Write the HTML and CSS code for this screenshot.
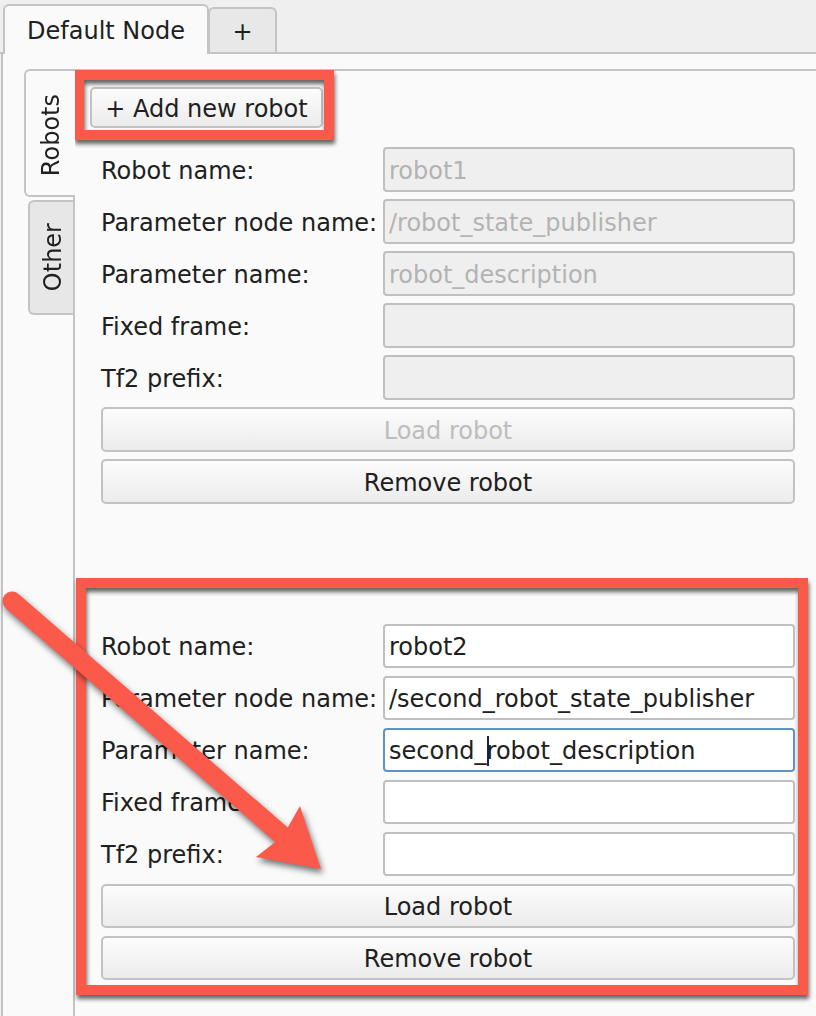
FILE: index.html
```html
<!DOCTYPE html>
<html>
<head>
<meta charset="utf-8">
<link rel="stylesheet" href="styles.css">
</head>
<body>
<div class="app">
  <div class="tabbar">
    <div class="tab active">Default Node</div>
    <div class="tab plus">+</div>
  </div>
  <div class="outer-pane">
    <div class="side-tabs">
      <div class="vtab active"><span>Robots</span></div>
      <div class="vtab other"><span>Other</span></div>
    </div>
    <div class="inner-pane">
      <button class="btn add">+ Add new robot</button>
      <div class="robot-form">
        <div class="label">Robot name:</div>
        <div class="field disabled">robot1</div>
        <div class="label">Parameter node name:</div>
        <div class="field disabled">/robot_state_publisher</div>
        <div class="label">Parameter name:</div>
        <div class="field disabled">robot_description</div>
        <div class="label">Fixed frame:</div>
        <div class="field disabled"></div>
        <div class="label">Tf2 prefix:</div>
        <div class="field disabled"></div>
        <button class="btn wide" disabled>Load robot</button>
        <button class="btn wide">Remove robot</button>
      </div>
      <div class="robot-form second">
        <div class="label">Robot name:</div>
        <div class="field">robot2</div>
        <div class="label">Parameter node name:</div>
        <div class="field">/second_robot_state_publisher</div>
        <div class="label">Parameter name:</div>
        <div class="field focused">second_<span class="caret"></span>robot_description</div>
        <div class="label">Fixed frame:</div>
        <div class="field"></div>
        <div class="label">Tf2 prefix:</div>
        <div class="field"></div>
        <button class="btn wide">Load robot</button>
        <button class="btn wide">Remove robot</button>
      </div>
    </div>
  </div>
  <div class="box box1"></div>
  <div class="box box2"></div>
  <svg class="arrow" width="816" height="1016" viewBox="0 0 816 1016">
    <line x1="12" y1="601" x2="283" y2="836" stroke="#fb5a4b" stroke-width="19" stroke-linecap="round"/>
    <polygon points="321,869 300,806 283,836 256,857" fill="#fb5a4b"/>
  </svg>
</div>
</body>
</html>
```

FILE: styles.css
```css
html, body {
  margin: 0;
  padding: 0;
}
body {
  background: #efefef;
  font-family: "DejaVu Sans", "Noto Sans", sans-serif;
  font-size: 24px;
  color: #202020;
  width: 816px;
  height: 1016px;
  overflow: hidden;
}
.app {
  position: relative;
  width: 816px;
  height: 1016px;
  display: flex;
  flex-direction: column;
}
.tabbar {
  display: flex;
  align-items: flex-end;
  height: 54px;
  box-sizing: border-box;
  padding-left: 3px;
  border-bottom: 2px solid #c4c4c4;
  flex: none;
}
.tab {
  box-sizing: border-box;
  border: 2px solid #c4c4c4;
  border-bottom: none;
  border-radius: 6px 6px 0 0;
  display: flex;
  align-items: center;
  justify-content: center;
}
.tab.active {
  width: 206px;
  height: 50px;
  margin-bottom: -2px;
  background: #fafafa;
  padding-top: 1px;
  position: relative;
  z-index: 1;
}
.tab.plus {
  width: 69px;
  height: 45px;
  margin-left: -1px;
  background: #e8e8e8;
  padding-top: 3px;
}
.outer-pane {
  flex: 1;
  display: flex;
  margin-left: 1px;
  border-left: 2px solid #c4c4c4;
  background: #fafafa;
  padding-top: 15px;
}
.side-tabs {
  width: 70px;
  flex: none;
  display: flex;
  flex-direction: column;
  align-items: flex-end;
}
.vtab {
  box-sizing: border-box;
  border: 2px solid #c4c4c4;
  border-right: none;
  border-radius: 6px 0 0 6px;
  display: flex;
  align-items: center;
  justify-content: center;
  position: relative;
  z-index: 1;
}
.vtab span {
  writing-mode: vertical-rl;
  transform: rotate(180deg);
}
.vtab.active {
  width: 51px;
  height: 128px;
  margin-right: -2px;
  background: #fafafa;
  padding-top: 4px;
}
.vtab.other {
  width: 45px;
  height: 115px;
  margin-top: 3px;
  background: #e7e7e7;
  padding-left: 3px;
}
.inner-pane {
  flex: 1;
  border-top: 2px solid #c4c4c4;
  border-left: 2px solid #c4c4c4;
  background: #fafafa;
  padding: 16px 21px 0 15px;
  display: flex;
  flex-direction: column;
  align-items: flex-start;
}
.btn {
  box-sizing: border-box;
  font-family: inherit;
  font-size: 24px;
  color: #202020;
  border: 2px solid #c2c2c2;
  border-radius: 5px;
  background: linear-gradient(#fcfcfc, #ececec);
  padding: 2px 0 0;
  margin: 0;
  height: 45px;
}
.btn:disabled {
  color: #bdbdbd;
}
.btn.add {
  width: 233px;
  height: 41px;
}
.robot-form {
  align-self: stretch;
  margin-left: 11px;
  margin-top: 19px;
  display: grid;
  grid-template-columns: 282px 1fr;
  grid-auto-rows: 45px;
  row-gap: 7px;
}
.robot-form.second {
  margin-top: 120px;
  grid-auto-rows: 44px;
  row-gap: 8px;
}
.label {
  align-self: center;
  white-space: nowrap;
  padding-top: 2px;
}
.field {
  box-sizing: border-box;
  border: 2px solid #c0c0c0;
  border-radius: 4px;
  background: #ffffff;
  display: flex;
  align-items: center;
  padding: 2px 5px 0 4px;
  white-space: nowrap;
}
.field.disabled {
  background: #efefef;
  color: #b3b3b3;
}
.field.focused {
  border-color: #5f93c2;
}
.caret {
  display: inline-block;
  width: 2px;
  height: 30px;
  margin-right: -2px;
  background: #1c1c5c;
}
.btn.wide {
  grid-column: 1 / -1;
  height: auto;
}
.box {
  position: absolute;
  box-sizing: border-box;
  border: 10px solid #fb5a4b;
  filter: drop-shadow(1px 4px 2px rgba(0, 0, 0, 0.6));
}
.box1 {
  left: 74px;
  top: 70px;
  width: 260px;
  height: 70px;
}
.box2 {
  left: 76px;
  top: 578px;
  width: 732px;
  height: 417px;
}
.arrow {
  position: absolute;
  left: 0;
  top: 0;
  filter: drop-shadow(2px 4px 3px rgba(0, 0, 0, 0.55));
  pointer-events: none;
}
```
